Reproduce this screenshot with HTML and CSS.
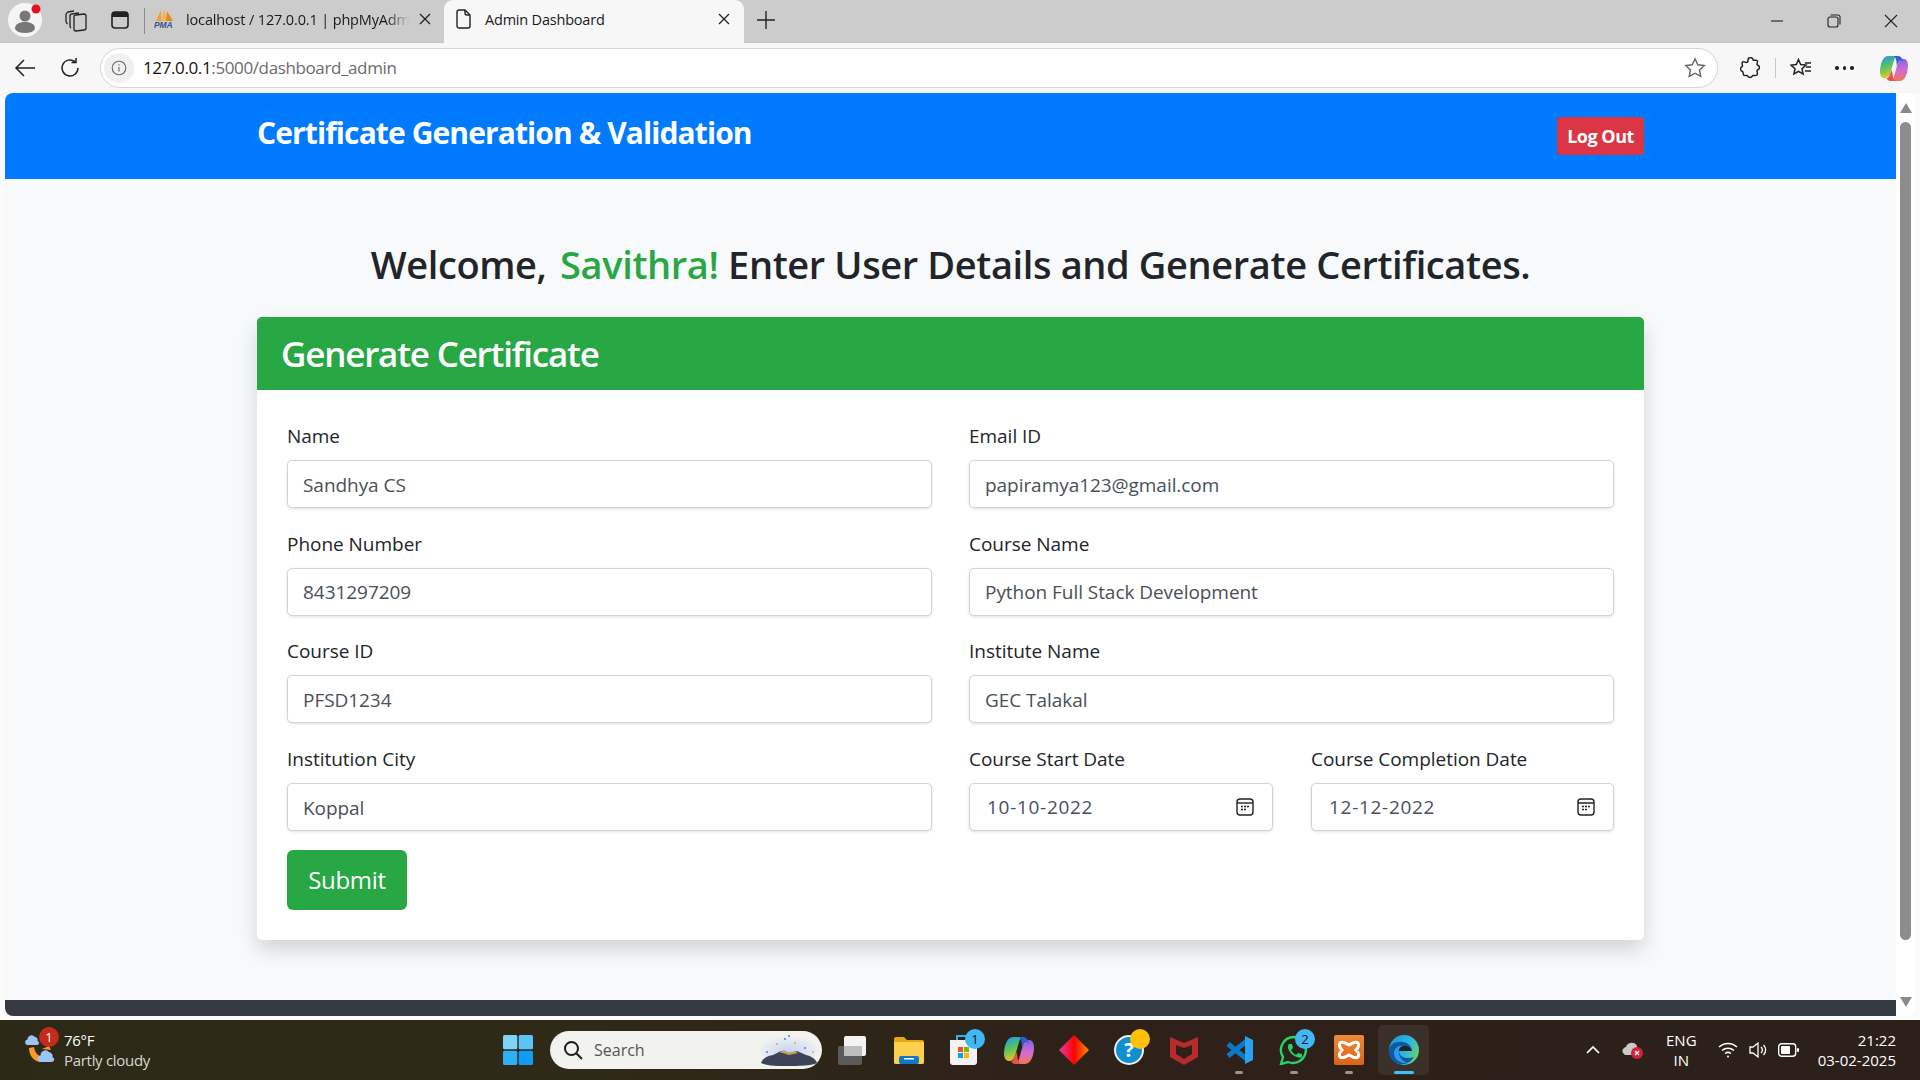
FILE: index.html
```html
<!DOCTYPE html>
<html lang="en">
<head>
<meta charset="utf-8">
<title>Admin Dashboard</title>
<link rel="stylesheet" href="styles.css">
</head>
<body>
<svg class="defs" width="0" height="0" aria-hidden="true">
  <defs>
    <linearGradient id="cpa" x1="0.2" y1="0" x2="0.5" y2="1"><stop offset="0" stop-color="#1f9be8"/><stop offset=".5" stop-color="#5cc65a"/><stop offset="1" stop-color="#f7c325"/></linearGradient>
    <linearGradient id="cpb" x1="0.5" y1="0" x2="0.5" y2="1"><stop offset="0" stop-color="#8a63e8"/><stop offset=".55" stop-color="#d56bd0"/><stop offset="1" stop-color="#f2764f"/></linearGradient>
    <linearGradient id="dm" x1="0" x2="1" y1="0" y2="0"><stop offset="0" stop-color="#e23fa8"/><stop offset=".5" stop-color="#f00"/><stop offset="1" stop-color="#fb8c00"/></linearGradient>
    <linearGradient id="ed" x1="0.1" x2="1" y1="0.2" y2="0.6"><stop offset="0" stop-color="#1d9be0"/><stop offset=".6" stop-color="#32b8dc"/><stop offset="1" stop-color="#62d76a"/></linearGradient>
    <linearGradient id="xa" x1="0" x2="0" y1="0" y2="1"><stop offset="0" stop-color="#ee8a3a"/><stop offset="1" stop-color="#d9641a"/></linearGradient>
    <symbol id="copilot" viewBox="0 0 30 29">
      <path d="M9 1H19C17 1 16 3 15 6L11 20C10 23 8 25 5 25C2 25 0 22 0 18C0 10 3 1 9 1z" fill="url(#cpa)"/>
      <path d="M21 28H11C13 28 14 26 15 23L19 9C20 6 22 4 25 4C28 4 30 7 30 11C30 19 27 28 21 28z" fill="url(#cpb)"/>
      <path d="M15 1H19C22 1 23.500 3 24.500 6L25 8.500C23 4.500 20.500 5 19 9L18 12C18 6 17 3 15 1z" fill="#2f5fd8"/>
      <path d="M7 25C9 25 10 23 11 20L12.500 16C14 21 13 26 17 28H11C9.500 28 8 27 7 25z" fill="#e8504a"/>
    </symbol>
    <symbol id="wcloud" viewBox="0 0 16 12">
      <path d="M3.500 12a3 3 0 0 1-1-6 4.500 4.500 0 0 1 8-3 3.500 3.500 0 0 1 3 4.500 2.300 2.300 0 0 1-.5 4.500z" fill="#9cc4f4"/>
    </symbol>
    <symbol id="cal" viewBox="0 0 18 18">
      <g fill="none" stroke="#222" stroke-width="1.400"><rect x="1" y="1" width="16" height="16" rx="3"/><path d="M1 5h16"/><path d="M5 8.500h2M8 8.500h2M11 8.500h2M5 11.500h2M8 11.500h2" stroke-width="1.600"/></g>
    </symbol>
    <symbol id="xmark" viewBox="0 0 12 12">
      <path d="M1 1l10 10M11 1 1 11" stroke="#222" stroke-width="1.300"/>
    </symbol>
  </defs>
</svg>
<div class="screen">
  <div class="tabstrip">
    <div class="profile">
      <svg width="34" height="34" viewBox="0 0 34 34"><circle cx="17" cy="17" r="17" fill="#f5f5f5"/><circle cx="17" cy="13" r="5.500" fill="#777"/><path d="M7 26c0-5 4-7 10-7s10 2 10 7c-2 3-6 4-10 4s-8-1-10-4z" fill="#777"/><circle cx="28" cy="6" r="4.500" fill="#e81123"/></svg>
    </div>
    <svg class="strip-icon first" width="22" height="22" viewBox="0 0 22 22" fill="none" stroke="#222" stroke-width="1.300"><path d="M9 7C9 6 10 5 11 5L19 4C20 4 21 5 21 6V18C21 19 20 20 19 20L11 21C10 21 9 20 9 19z"/><path d="M6 18C5 17 5 17 5 16V6C5 5 6 4 7 4L14 3"/><path d="M2.500 14C1.500 13 1 12 1 11V5C1 3 2 2.500 3 2L9 1"/></svg>
    <svg class="strip-icon" width="20" height="20" viewBox="0 0 20 20"><rect x="2" y="2" width="16" height="16" rx="3" fill="none" stroke="#222" stroke-width="1.600"/><path d="M2 5a3 3 0 0 1 3-3h10a3 3 0 0 1 3 3v2H2z" fill="#222"/></svg>
    <span class="strip-divider"></span>
    <div class="tab tab-inactive">
      <svg class="pma" width="20" height="20" viewBox="0 0 20 20"><path d="M7 1 2 12h5z" fill="#f29d38"/><path d="M10 0 7 12h6z" fill="#f6b352"/><path d="M13 2l-1 10h7z" fill="#e8871e"/><text x="0" y="19" class="pma-text">PMA</text></svg>
      <span class="tab-label fade">localhost / 127.0.0.1 | phpMyAdm</span>
      <svg class="tab-x" width="12" height="12"><use href="#xmark"/></svg>
    </div>
    <div class="tab tab-active">
      <svg width="15" height="20" viewBox="0 0 15 20" fill="none" stroke="#222" stroke-width="1.400"><path d="M3 1h6l5 5v11a2 2 0 0 1-2 2H3a2 2 0 0 1-2-2V3a2 2 0 0 1 2-2z"/><path d="M9 1v3a2 2 0 0 0 2 2h3"/></svg>
      <span class="tab-label">Admin Dashboard</span>
      <svg class="tab-x" width="12" height="12"><use href="#xmark"/></svg>
    </div>
    <svg class="plus" width="18" height="18" viewBox="0 0 18 18"><path d="M9 0v18M0 9h18" stroke="#222" stroke-width="1.400"/></svg>
    <div class="win-controls">
      <svg width="14" height="14" viewBox="0 0 14 14"><path d="M1 7h12" stroke="#222" stroke-width="1.100"/></svg>
      <svg width="14" height="14" viewBox="0 0 14 14" fill="none" stroke="#222" stroke-width="1.100"><rect x="1" y="3" width="10" height="10" rx="2"/><path d="M3.500 1H11a2 2 0 0 1 2 2v7.500"/></svg>
      <svg width="14" height="14" viewBox="0 0 14 14"><path d="M1 1l12 12M13 1 1 13" stroke="#222" stroke-width="1.100"/></svg>
    </div>
  </div>

  <div class="toolbar">
    <svg class="tool first-tool" width="22" height="20" viewBox="0 0 22 20" fill="none" stroke="#222" stroke-width="1.500"><path d="M10 2 2 10l8 8M2 10h19"/></svg>
    <svg class="tool" width="22" height="22" viewBox="0 0 22 22" fill="none" stroke="#222" stroke-width="1.500"><path d="M19 11a8 8 0 1 1-3-6.300M17 1v4.500h-4.500"/></svg>
    <div class="address">
      <span class="info"><svg width="16" height="16" viewBox="0 0 16 16" fill="none" stroke="#666" stroke-width="1.100"><circle cx="8" cy="8" r="6.800"/><path d="M8 7v4.500M8 4.200v1.400"/></svg></span>
      <span class="url"><span class="url-host">127.0.0.1</span>:5000/dashboard_admin</span>
      <svg class="star" width="22" height="22" viewBox="0 0 22 22" fill="none" stroke="#666" stroke-width="1.400"><path d="M11 1.800l2.800 6 6.500.8-4.800 4.400 1.300 6.400-5.800-3.200-5.800 3.200L6.500 13 1.700 8.600l6.500-.8z"/></svg>
    </div>
    <div class="tool-right">
      <svg class="t-ext" width="20" height="22" viewBox="0 0 20 22" fill="none" stroke="#222" stroke-width="1.500"><path d="M8 3a2.500 2.500 0 0 1 5 0c0 1 3-.5 4 .5s0 3 0 4 2.500.5 2.500 3-2.500 2-2.500 3 1 3.500 0 4.500-3 .5-4 .5-.5 2-3 2-2-2-3-2-3 .5-3.500-.5 0-3-1-3.500-2-.5-2-2.500 2-2 2-3-1-3 0-4 3 .5 4 .5 1.500-1 1.500-2z"/></svg>
      <span class="tool-divider"></span>
      <svg class="t-fav" width="22" height="20" viewBox="0 0 22 20" fill="none" stroke="#222" stroke-width="1.500"><path d="M8.500 1.500l2.200 5 5.300.6-4 3.700 1.100 5.200-4.600-2.700-4.600 2.700 1.100-5.200-4-3.700 5.300-.6z"/><path d="M15 5h6M16 9h5M15 13h6"/></svg>
      <span class="t-dots"><i></i><i></i><i></i></span>
      <svg class="t-copilot" width="28" height="27"><use href="#copilot"/></svg>
    </div>
  </div>

  <div class="viewport">
    <div class="page">
      <header class="navbar">
        <span class="brand">Certificate Generation &amp; Validation</span>
        <button class="logout" type="button">Log Out</button>
      </header>
      <main class="content">
        <h2 class="welcome">Welcome, <span class="who">Savithra!</span> Enter User Details and Generate Certificates.</h2>
        <section class="card">
          <div class="card-head"><h3>Generate Certificate</h3></div>
          <form class="card-body">
            <div class="form-grid">
              <div class="group"><label>Name</label><input class="control" value="Sandhya CS"></div>
              <div class="group"><label>Email ID</label><input class="control" value="papiramya123@gmail.com"></div>
              <div class="group"><label>Phone Number</label><input class="control" value="8431297209"></div>
              <div class="group"><label>Course Name</label><input class="control" value="Python Full Stack Development"></div>
              <div class="group"><label>Course ID</label><input class="control" value="PFSD1234"></div>
              <div class="group"><label>Institute Name</label><input class="control" value="GEC Talakal"></div>
              <div class="group"><label>Institution City</label><input class="control" value="Koppal"></div>
              <div class="date-pair">
                <div class="group"><label>Course Start Date</label>
                  <div class="control date"><input class="date-input" value="10-10-2022">
                    <svg width="18" height="18"><use href="#cal"/></svg>
                  </div>
                </div>
                <div class="group"><label>Course Completion Date</label>
                  <div class="control date"><input class="date-input" value="12-12-2022">
                    <svg width="18" height="18"><use href="#cal"/></svg>
                  </div>
                </div>
              </div>
            </div>
            <button class="submit" type="button">Submit</button>
          </form>
        </section>
      </main>
      <footer class="page-foot"></footer>
    </div>
    <div class="scrollbar">
      <span class="arrow-up"></span>
      <span class="thumb"></span>
      <span class="arrow-down"></span>
    </div>
  </div>

  <div class="taskbar">
    <div class="weather">
      <span class="weather-icon">
        <svg width="34" height="34" viewBox="0 0 34 34"><use href="#wcloud" x="1" y="1" width="15" height="11"/><path d="M5 15C5 24 12 30 18 29C22 28 24 26 25 24C18 26 11 22 10 14z" fill="#f59a23"/><path d="M18 16l7-3 2 4z" fill="#f59a23"/><use href="#wcloud" x="13" y="16" width="19" height="13"/></svg>
        <b class="weather-badge">1</b>
      </span>
      <div class="weather-text"><span>76°F</span><span class="dim">Partly cloudy</span></div>
    </div>
    <svg class="start" width="30" height="30" viewBox="0 0 30 30"><rect width="14.300" height="14.300" rx="1.500" fill="#7fd3f7"/><rect x="15.700" width="14.300" height="14.300" rx="1.500" fill="#5cc3f5"/><rect y="15.700" width="14.300" height="14.300" rx="1.500" fill="#2fb0f5"/><rect x="15.700" y="15.700" width="14.300" height="14.300" rx="1.500" fill="#0f9cf5"/></svg>
    <div class="search">
      <svg class="search-glass" width="20" height="20" viewBox="0 0 20 20" fill="none" stroke="#1c1c1c" stroke-width="2"><circle cx="8.500" cy="8.500" r="6.500"/><path d="M13.500 13.500 19 19"/></svg>
      <span>Search</span>
      <svg class="search-art" width="60" height="32" viewBox="0 0 60 32"><defs><radialGradient id="glow" cx=".5" cy=".6" r=".55"><stop offset="0" stop-color="#c4d2f4"/><stop offset="1" stop-color="#f2f2ee"/></radialGradient></defs><ellipse cx="30" cy="15" rx="29" ry="15" fill="url(#glow)"/><path d="M2 29c1-4 6-7 12-8l8-4 8 2 8-2 9 4c5 1 10 4 11 8-4 2-10 3-28 3S6 31 2 29z" fill="#3d4358"/><path d="M20 18l5-2 5 3 6-2 3 2-9 2z" fill="#c2a44e"/><circle cx="18" cy="10" r="1" fill="#d9b13b"/><circle cx="26" cy="5" r="1" fill="#4d7fe0"/><circle cx="30" cy="2" r="1" fill="#4d7fe0"/><circle cx="36" cy="9" r="1" fill="#d9b13b"/><circle cx="46" cy="14" r="1" fill="#4d7fe0"/><circle cx="54" cy="18" r="1" fill="#d9b13b"/><circle cx="8" cy="18" r="1" fill="#4d7fe0"/></svg>
    </div>
    <div class="apps">
      <span class="app"><svg width="32" height="30" viewBox="0 0 32 30"><rect x="0" y="11" width="24" height="19" rx="2" fill="#5a5a5a"/><rect x="6" y="1" width="22" height="20" rx="2" fill="#f3f3f3"/><rect x="6" y="11" width="18" height="10" fill="#bdbdbd"/></svg></span>
      <span class="app"><svg width="30" height="28" viewBox="0 0 30 28"><path d="M0 3a2 2 0 0 1 2-2h8l3 3h15a2 2 0 0 1 2 2v20a2 2 0 0 1-2 2H2a2 2 0 0 1-2-2z" fill="#e5a90f"/><path d="M0 6h30v20a2 2 0 0 1-2 2H2a2 2 0 0 1-2-2z" fill="#fccf4d"/><rect x="5" y="20" width="20" height="8" rx="2" fill="#0f78c8"/><rect x="10" y="22" width="10" height="1.500" fill="#fff"/></svg></span>
      <span class="app"><svg width="30" height="32" viewBox="0 0 30 32"><path d="M8 6V2h12v4" fill="none" stroke="#2fb0f5" stroke-width="2"/><path d="M1 6h27v22a3 3 0 0 1-3 3H4a3 3 0 0 1-3-3z" fill="#f3f3f3"/><rect x="9" y="13" width="5" height="5" fill="#f25022"/><rect x="15" y="13" width="5" height="5" fill="#7fba00"/><rect x="9" y="19" width="5" height="5" fill="#00a4ef"/><rect x="15" y="19" width="5" height="5" fill="#ffb900"/></svg><b class="bubble blue">1</b></span>
      <span class="app"><svg width="30" height="29"><use href="#copilot"/></svg></span>
      <span class="app"><svg width="30" height="30" viewBox="0 0 30 30"><path d="M15 0l15 15-15 15L0 15z" fill="url(#dm)"/></svg></span>
      <span class="app"><svg width="30" height="30" viewBox="0 0 30 30"><circle cx="15" cy="15" r="14" fill="#0f8fce" stroke="#f0f0f0" stroke-width="2"/><text x="15" y="22" class="help-mark">?</text></svg><b class="bubble amber"></b></span>
      <span class="app"><svg width="28" height="30" viewBox="0 0 28 30"><path d="M0 2l14 6 14-6v20l-14 8-14-8zM6 10v9l8 5 8-5v-9l-8 3z" fill="#b92a2a" fill-rule="evenodd"/></svg></span>
      <span class="app running"><svg width="30" height="30" viewBox="0 0 30 30"><path d="M24 5 4 21M4 9l20 16" fill="none" stroke="#0e78c8" stroke-width="5"/><path d="M21 1l8 4v20l-8 4z" fill="#2aa3ee"/></svg></span>
      <span class="app running"><svg width="30" height="30" viewBox="0 0 30 30"><path d="M15 2a13 13 0 0 0-11 20L2 29l7-2a13 13 0 1 0 6-25z" fill="none" stroke="#25d366" stroke-width="2.400"/><path d="M10 9l3 0 1 4-2 2c1 2 3 4 5 5l2-2 4 1v3c-1 1-3 1-5 0-4-1-8-5-9-9 0-2 0-3 1-4z" fill="#25d366"/></svg><b class="bubble blue">2</b></span>
      <span class="app running"><svg width="30" height="30" viewBox="0 0 30 30"><rect width="30" height="30" rx="2" fill="url(#xa)"/><path d="M6 8c3-2 5 0 9 2 4-2 6-4 9-2 2 3 0 5-2 7 2 2 4 4 2 7-3 2-5 0-9-2-4 2-6 4-9 2-2-3 0-5 2-7-2-2-4-4-2-7z" fill="none" stroke="#fff" stroke-width="3"/></svg></span>
      <span class="app active-app"><svg width="32" height="32" viewBox="0 0 32 32"><circle cx="16" cy="16" r="15" fill="url(#ed)"/><path d="M1 17C1 10 8 7 15 8c6 1 9 5 9 9H11c0 5 6 9 15 6-3 5-8 8-14 7C6 29 1 24 1 17z" fill="#0c5aa6"/><path d="M6 19c0-5 5-8 9-7-3 1-5 4-4 8 1 5 5 8 9 9-7 1-14-3-14-10z" fill="#2a9be8"/><path d="M11 17c0-4 3-5 6-5s6 2 7 5z" fill="#2a211b"/></svg></span>
    </div>
    <div class="tray">
      <svg class="tray-chev" width="16" height="10" viewBox="0 0 16 10" fill="none" stroke="#fff" stroke-width="1.700"><path d="M2 8l6-6 6 6"/></svg>
      <svg class="tray-cloud" width="22" height="20" viewBox="0 0 22 20"><path d="M1 13a4 4 0 0 1 3-6 6 6 0 0 1 11-1l0 9H3z" fill="#c9c9c9"/><circle cx="15" cy="13" r="6" fill="#d81e3a"/><path d="M13 11l4 4M17 11l-4 4" stroke="#fff" stroke-width="1.400"/></svg>
      <div class="lang"><span>ENG</span><span>IN</span></div>
      <svg class="tray-wifi" width="20" height="16" viewBox="0 0 20 16" fill="none" stroke="#fff" stroke-width="1.500"><path d="M1 5a13 13 0 0 1 18 0M4 8.500a9 9 0 0 1 12 0M7 11.500a5 5 0 0 1 6 0"/><circle cx="10" cy="14.500" r="1" fill="#fff" stroke="none"/></svg>
      <svg class="tray-vol" width="20" height="18" viewBox="0 0 20 18" fill="none" stroke="#fff" stroke-width="1.300"><path d="M1 6h3l5-4v14l-5-4H1z"/><path d="M12 6a4 4 0 0 1 0 6M14.500 4a7 7 0 0 1 0 10"/></svg>
      <svg class="tray-bat" width="21" height="14" viewBox="0 0 21 14"><rect x=".7" y=".7" width="17" height="12.600" rx="3" fill="none" stroke="#fff" stroke-width="1.400"/><rect x="3" y="3" width="9" height="8" rx="1" fill="#fff"/><rect x="19" y="5" width="2" height="4" rx="1" fill="#fff"/></svg>
      <div class="clock"><span>21:22</span><span>03-02-2025</span></div>
    </div>
  </div>
</div>
</body>
</html>
```
FILE: styles.css
```css
* { box-sizing: border-box; }
html, body { margin: 0; padding: 0; height: 100%; overflow: hidden; }
body { font-family: "Open Sans", "Noto Sans", sans-serif; color: #212529; }
.defs { position: absolute; }
.screen { width: 1920px; height: 1080px; display: flex; flex-direction: column; background: #fbfbfb; }

/* tab strip */
.tabstrip { height: 43px; flex: none; background: #cccccc; display: flex; align-items: flex-start; padding-left: 8px; border-bottom: 1px solid #c4c4c4; }
.profile { width: 34px; height: 34px; margin-top: 3px; }
.strip-icon { margin-top: 10px; }
.strip-icon.first { margin-left: 23px; }
.strip-icon:not(.first) { margin-left: 23px; }
.strip-divider { width: 1px; height: 26px; background: #8a8a8a; margin: 8px 0 0 14px; }
.tab { height: 43px; display: flex; align-items: center; font-size: 14.5px; letter-spacing: -.15px; color: #1a1a1a; }
.tab-inactive { width: 299px; padding: 0 13px 5px 9px; }
.tab-active { width: 300px; padding: 0 14px 5px 12px; background: #f7f7f7; border-radius: 9px 9px 0 0; }
.pma { flex: none; }
.pma-text { font: italic bold 8.500px "Liberation Sans", sans-serif; fill: #34568b; }
.tab-label { flex: 1; margin-left: 12px; white-space: nowrap; min-width: 0; }
.tab-active .tab-label { margin-left: 14px; letter-spacing: -.2px; }
.fade { -webkit-mask-image: linear-gradient(90deg, #000 90%, transparent); mask-image: linear-gradient(90deg, #000 90%, transparent); }
.tab-x { flex: none; margin-left: 10px; }
.plus { margin: 11px 0 0 13px; }
.win-controls { margin-left: auto; display: flex; gap: 43px; padding: 14px 22px 0 0; }

/* toolbar */
.toolbar { height: 50px; flex: none; display: flex; align-items: center; padding: 0 15px 0 14px; background: #f7f7f7; }
.tool { flex: none; }
.first-tool { margin-right: 23px; }
.address { margin-left: 19px; width: 1618px; height: 40px; flex: none; display: flex; align-items: center; background: #fff; border: 1.5px solid #d5d5d5; border-radius: 20px; padding: 0 11px 0 3px; }
.info { width: 30px; height: 30px; border-radius: 50%; background: #f0f0f0; display: flex; align-items: center; justify-content: center; flex: none; }
.url { margin-left: 9px; font-size: 17px; line-height: 22px; margin-top: -1px; letter-spacing: -.38px; color: #6b6b6b; flex: 1; }
.url-host { color: #111; }
.tool-right { flex: 1; display: flex; align-items: center; padding-left: 22px; }
.t-ext { flex: none; }
.tool-divider { width: 1px; height: 20px; background: #c8c8c8; margin: 0 14px 0 15px; flex: none; }
.t-fav { flex: none; margin-right: 23px; }
.t-dots { display: flex; gap: 4px; flex: none; margin-right: 26px; }
.t-dots i { width: 3.500px; height: 3.500px; border-radius: 50%; background: #222; display: block; }
.t-copilot { flex: none; }

/* viewport */
.viewport { height: 923px; flex: none; display: flex; margin: 0 5px; background: #fff; border-radius: 8px; overflow: hidden; }
.page { width: 1891px; flex: none; display: flex; flex-direction: column; background: #f8f9fa; }
.navbar { height: 86px; flex: none; background: #007bff; display: flex; align-items: center; justify-content: space-between; padding: 0 252px; }
.brand { font-size: 30px; font-weight: 700; color: #fff; letter-spacing: -.9px; margin-top: -7px; }
.logout { width: 87px; height: 38px; background: #dc3545; color: #fff; border: 0; border-radius: 4px; font: 700 18px "Open Sans", sans-serif; letter-spacing: -.5px; padding: 0; }
.content { flex: 1; display: flex; flex-direction: column; align-items: center; padding-top: 61px; }
.welcome { margin: 0; font-size: 38px; line-height: 48px; font-weight: 600; letter-spacing: -.38px; color: #212529; }
.who { color: #28a745; margin-left: 4px; }
.card { width: 1387px; margin-top: 29px; background: #fff; border-radius: 5px; box-shadow: 0 10px 20px rgba(0, 0, 0, .15); overflow: hidden; }
.card-head { height: 73px; background: #28a745; padding: 0 24px; display: flex; align-items: center; }
.card-head h3 { margin: 0; color: #fff; font-size: 35px; line-height: 42px; font-weight: 600; letter-spacing: -1.2px; }
.card-body { padding: 33px 30px 30px; }
.form-grid { display: grid; grid-template-columns: 645px 645px; column-gap: 37px; }
.group { display: flex; flex-direction: column; height: 107.7px; }
.group label { font-size: 19px; line-height: 26px; margin-bottom: 11px; letter-spacing: -.03px; color: #212529; }
.control { width: 100%; height: 48px; flex: none; border: 1px solid #ced4da; border-radius: 5px; background: #fff; padding: 1px 15px 0; font: 19px "Open Sans", sans-serif; letter-spacing: -.05px; color: #495057; box-shadow: 0 1px 3px rgba(0, 0, 0, .12); outline: 0; }
.date { display: flex; align-items: center; justify-content: space-between; padding: 0 18px 0 17px; }
.date-input { border: 0; outline: 0; padding: 0; width: 200px; background: none; font: 19px "Open Sans", sans-serif; letter-spacing: .7px; color: #495057; }
.date-pair { display: grid; grid-template-columns: 304px 303px; column-gap: 38px; }
.submit { display: block; width: 120px; height: 60px; background: #28a745; color: #fff; border: 0; border-radius: 6px; font: 24px "Open Sans", sans-serif; letter-spacing: -.3px; padding: 0; margin-top: -4px; }
.page-foot { height: 16px; flex: none; background: #343a40; }

/* scrollbar */
.scrollbar { flex: 1; background: #fff; display: flex; flex-direction: column; align-items: center; padding-top: 10px; }
.arrow-up { width: 0; height: 0; border: 6.500px solid transparent; border-top: 0; border-bottom: 10px solid #8a8a8a; }
.thumb { width: 11px; height: 818px; background: #8c8c8c; border-radius: 6px; margin-top: 9px; }
.arrow-down { width: 0; height: 0; border: 6.500px solid transparent; border-bottom: 0; border-top: 10px solid #8a8a8a; margin-top: 57px; }

/* taskbar */
.taskbar { height: 60px; flex: none; margin-top: auto; display: flex; align-items: center; padding-left: 24px; color: #fff; background: linear-gradient(90deg, #2c2a16 0, #2f2918 30%, #2d2119 60%, #2c201b 100%); }
.weather { display: flex; align-items: center; width: 479px; flex: none; }
.weather-icon { position: relative; width: 34px; height: 34px; flex: none; }
.weather-badge { position: absolute; left: 15px; top: -6px; width: 20px; height: 20px; border-radius: 50%; background: #c42b1c; font: 400 13px/20px "Open Sans", sans-serif; text-align: center; }
.weather-text { display: flex; flex-direction: column; margin-left: 6px; font-size: 15px; line-height: 20px; letter-spacing: -.3px; margin-top: -1px; }
.dim { color: #d8d8d2; }
.start { flex: none; }
.search { width: 272px; height: 38px; margin-left: 17px; background: #f2f2ee; border-radius: 19px; flex: none; display: flex; align-items: center; padding: 0 3px 0 13px; color: #555; font-size: 16px; }
.search-glass { flex: none; }
.search span { margin-left: 11px; flex: 1; }
.search-art { flex: none; }
.apps { display: flex; margin-left: 4px; flex: none; }
.app { width: 55px; height: 60px; display: flex; align-items: center; justify-content: center; position: relative; }
.running::after { content: ""; position: absolute; bottom: 6px; left: 24px; width: 8px; height: 3px; border-radius: 2px; background: #9a9590; }
.active-app::before { content: ""; position: absolute; left: 2px; top: 5px; width: 51px; height: 50px; border-radius: 5px; background: rgba(255, 255, 255, .07); }
.active-app::after { content: ""; position: absolute; bottom: 6px; left: 18px; width: 20px; height: 3px; border-radius: 2px; background: #3cc3f5; }
.active-app svg { position: relative; }
.bubble { position: absolute; top: 9px; left: 29px; width: 20px; height: 20px; border-radius: 50%; color: #111; font: 400 13px/20px "Open Sans", sans-serif; text-align: center; }
.blue { background: #41b8f5; }
.amber { background: #ffc107; }
.help-mark { font: 700 20px "Open Sans", sans-serif; fill: #fff; text-anchor: middle; }
.tray { flex: 1; display: flex; align-items: center; padding-right: 24px; }
.tray-chev { margin-left: 154px; flex: none; }
.tray-cloud { margin-left: 21px; flex: none; }
.lang { margin-left: 22px; display: flex; flex-direction: column; align-items: center; font-size: 15px; line-height: 20px; }
.tray-wifi { margin-left: 21px; flex: none; }
.tray-vol { margin-left: 11px; flex: none; }
.tray-bat { margin-left: 9px; flex: none; }
.clock { margin-left: auto; display: flex; flex-direction: column; align-items: flex-end; font-size: 15px; line-height: 20px; }
```
